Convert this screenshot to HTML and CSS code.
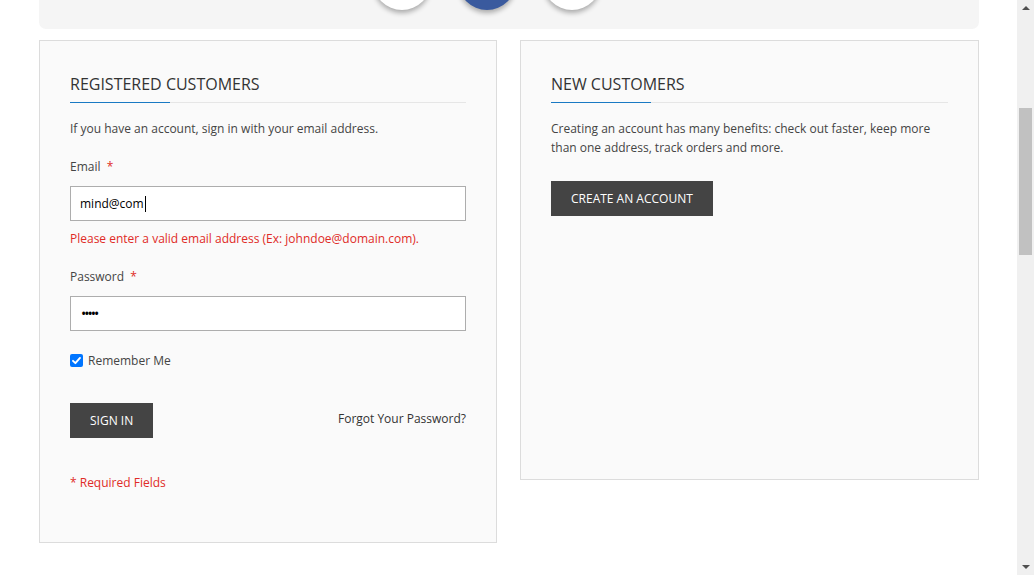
FILE: index.html
```html
<!DOCTYPE html>
<html>
<head>
<meta charset="utf-8">
<link rel="stylesheet" href="styles.css">
</head>
<body>
<div class="page">
  <div class="content">
    <div class="topbar">
      <div class="dots">
        <span class="dot"></span>
        <span class="dot active"></span>
        <span class="dot"></span>
      </div>
    </div>
    <div class="columns">
      <div class="panel login">
        <h2 class="title">Registered Customers</h2>
        <p class="intro">If you have an account, sign in with your email address.</p>
        <label class="label">Email <span class="req">*</span></label>
        <div class="input"><span class="value">mind@com</span><span class="caret"></span></div>
        <div class="error">Please enter a valid email address (Ex: johndoe@domain.com).</div>
        <label class="label pw">Password <span class="req">*</span></label>
        <div class="input"><span class="dots-pw">•••••</span></div>
        <div class="remember">
          <span class="checkbox"><svg width="13" height="13" viewBox="0 0 13 13"><rect width="13" height="13" rx="2" fill="#0075ff"/><path d="M3 6.8 L5.4 9.2 L10 3.9" stroke="#fff" stroke-width="1.9" fill="none" stroke-linecap="round" stroke-linejoin="round"/></svg></span>
          <span>Remember Me</span>
        </div>
        <div class="actions">
          <span class="btn">Sign In</span>
          <span class="forgot">Forgot Your Password?</span>
        </div>
        <div class="required">* Required Fields</div>
      </div>
      <div class="panel new">
        <h2 class="title">New Customers</h2>
        <p class="intro">Creating an account has many benefits: check out faster, keep more than one address, track orders and more.</p>
        <span class="btn create">Create an Account</span>
      </div>
    </div>
  </div>
  <div class="scrollbar">
    <span class="arrow up"></span>
    <div class="track"><div class="thumb"></div></div>
    <span class="arrow down"></span>
  </div>
</div>
</body>
</html>
```
FILE: styles.css
```css
* { box-sizing: border-box; }
html, body { margin: 0; padding: 0; }
body {
  font-family: "Open Sans", "Liberation Sans", sans-serif;
  color: #333;
  background: #fff;
  overflow: hidden;
}
.page {
  display: flex;
  width: 1034px;
  height: 575px;
}
.content {
  flex: 1;
  padding: 0 38px 0 39px;
  overflow: hidden;
}
.topbar {
  height: 29px;
  background: #f5f5f5;
  border-radius: 0 0 7px 7px;
  display: flex;
}
.dots {
  display: flex;
  gap: 27px;
  padding-left: 334px;
  margin-top: -48px;
  height: 58px;
}
.dot {
  width: 58px;
  height: 58px;
  border-radius: 50%;
  background: #fff;
  box-shadow: 0 3px 5px rgba(0,0,0,0.3);
}
.dot.active { background: #3a5a9e; }
.columns {
  display: flex;
  gap: 23px;
  align-items: flex-start;
  margin-top: 11px;
}
.panel {
  background: #fafafa;
  border: 1px solid #dcdcdc;
  padding: 31px 30px 0 30px;
  display: flex;
  flex-direction: column;
  align-items: flex-start;
}
.login { width: 458px; height: 503px; }
.new { width: 459px; height: 440px; }
.title {
  margin: 0;
  font-size: 16px;
  font-weight: 400;
  text-transform: uppercase;
  line-height: 24px;
  padding-bottom: 6px;
  border-bottom: 1px solid #e6e6e6;
  align-self: stretch;
  position: relative;
  color: #333;
}
.title::after {
  content: "";
  position: absolute;
  left: 0;
  bottom: -1px;
  width: 100px;
  height: 1px;
  background: #1979c3;
}
.intro {
  margin: 16px 0 0 0;
  font-size: 12px;
  line-height: 19px;
  color: #444;
}
.label {
  margin-top: 19px;
  font-size: 12px;
  line-height: 19px;
  color: #444;
}
.req { color: #e02b27; margin-left: 3px; }
.input {
  margin-top: 10px;
  align-self: stretch;
  height: 35px;
  background: #fff;
  border: 1px solid #adadad;
  display: flex;
  align-items: center;
  padding: 0 9px;
  font-size: 12px;
  color: #000;
}
.caret {
  display: inline-block;
  width: 1px;
  height: 16px;
  background: #000;
  margin-left: 1px;
}
.dots-pw { font-size: 14px; letter-spacing: -2px; padding-left: 1px; }
.error {
  margin-top: 8px;
  font-size: 12px;
  line-height: 19px;
  color: #e02b27;
}
.label.pw { margin-top: 19px; }
.remember {
  margin-top: 20px;
  display: flex;
  align-items: center;
  gap: 5px;
  font-size: 12px;
  line-height: 19px;
  color: #444;
}
.checkbox { display: flex; }
.actions {
  margin-top: 33px;
  align-self: stretch;
  display: flex;
  justify-content: space-between;
  align-items: center;
}
.btn {
  display: inline-flex;
  align-items: center;
  height: 35px;
  padding: 0 20px;
  background: #444;
  color: #fff;
  font-size: 12px;
  text-transform: uppercase;
}
.forgot {
  font-size: 12px;
  color: #333;
  margin-top: -5px;
}
.required {
  margin-top: 35px;
  font-size: 12px;
  line-height: 19px;
  color: #e02b27;
}
.create { margin-top: 24px; }
.scrollbar {
  width: 17px;
  background: #f0f0f0;
  display: flex;
  flex-direction: column;
  align-items: center;
}
.arrow {
  width: 0;
  height: 0;
  border-left: 4px solid transparent;
  border-right: 4px solid transparent;
}
.arrow.up { border-bottom: 4px solid #505050; margin-top: 6px; }
.arrow.down { border-top: 4px solid #505050; margin-bottom: 6px; }
.track { flex: 1; align-self: stretch; padding: 98px 2px 0 2px; }
.thumb { height: 147px; background: #c1c1c1; }
```
